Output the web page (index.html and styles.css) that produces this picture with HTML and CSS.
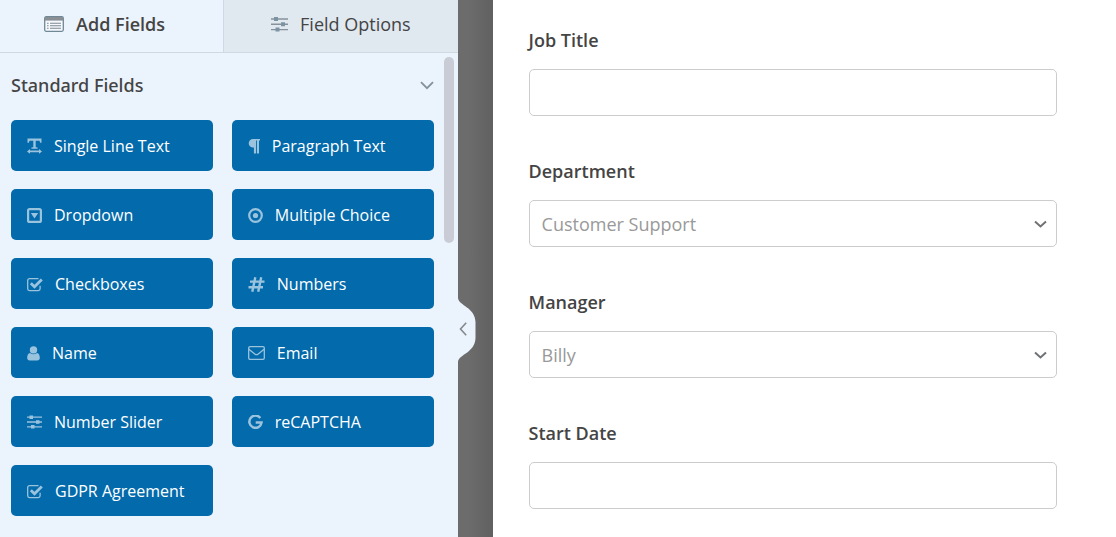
FILE: index.html
```html
<!DOCTYPE html>
<html lang="en">
<head>
<meta charset="utf-8">
<meta name="viewport" content="width=device-width, initial-scale=1">
<title>Form Builder</title>
<link rel="stylesheet" href="styles.css">
</head>
<body>
<div class="builder">
  <aside class="sidebar">
    <nav class="tabs">
      <button class="tab tab-active" type="button">
        <svg width="20" height="16" viewBox="0 0 20 16" fill="none"><rect x=".7" y=".7" width="18.6" height="14.6" rx="1.5" fill="#f5f9fd" stroke="#6f8796" stroke-width="1.3"/><path d="M1 1h18v3.6H1z" fill="#8a8f94"/><path d="M3 7.2h1.6M3 9.7h1.6M3 12.2h1.6M6 7.2h11M6 9.7h11M6 12.2h11" stroke="#7d8890" stroke-width="1.1"/></svg>
        Add Fields
      </button>
      <button class="tab" type="button">
        <svg width="17" height="16" viewBox="0 0 17 16"><path d="M0 3h17M0 8.3h17M0 13.6h17" stroke="#86919a" stroke-width="1.4"/><path d="M3 1h4v4H3zM10 6.3h4v4h-4zM4.500 11.600h4v4h-4z" fill="#7b93a3"/></svg>
        Field Options
      </button>
    </nav>
    <section class="group">
      <button class="group-title" type="button" aria-expanded="true">
        Standard Fields
        <svg width="14" height="9" viewBox="0 0 14 9" fill="none"><path d="M1 1.200l6 6 6-6" stroke="#84909b" stroke-width="1.800"/></svg>
      </button>
      <div class="fields">
        <button class="field" type="button"><svg width="15" height="16" viewBox="0 0 15 16"><path d="M.5.500h14v4.200h-1.400l-.6-2H8.700v6.500l1.900.4v1.200H4.400V9.600l1.900-.4V2.700H2.500l-.6 2H.5zM0 13.400l3-2.400v1.600h9V11l3 2.400-3 2.400v-1.600H3v1.600z" fill="currentColor"/></svg>Single Line Text</button>
        <button class="field" type="button"><svg width="12" height="15" viewBox="0 0 12 15"><path d="M5 0h7v1.600h-1V14.500H8.900V1.600H8v12.900H5.900V8.600H5A4.300 4.300 0 0 1 5 0z" fill="currentColor"/></svg>Paragraph Text</button>
        <button class="field" type="button"><svg width="15" height="15" viewBox="0 0 15 15"><rect x="1.100" y="1.100" width="12.800" height="12.800" rx="1.500" fill="none" stroke="currentColor" stroke-width="2.200"/><path d="M3.800 5h7.400L7.500 10.500z" fill="currentColor"/></svg>Dropdown</button>
        <button class="field" type="button"><svg width="15" height="15" viewBox="0 0 15 15"><circle cx="7.500" cy="7.500" r="6.300" fill="none" stroke="currentColor" stroke-width="2.200"/><circle cx="7.500" cy="7.500" r="2.600" fill="currentColor"/></svg>Multiple Choice</button>
        <button class="field" type="button"><svg width="16" height="15" viewBox="0 0 16 15" fill="none" stroke="currentColor"><path d="M11.500 1.600H2.500A1.800 1.800 0 0 0 .700 3.400v8.400a1.800 1.800 0 0 0 1.800 1.800h8.800a1.800 1.800 0 0 0 1.800-1.800V8.800" stroke-width="1.300"/><path d="M3.800 6.200l3.700 3.600 7.300-7.300" stroke-width="2.800"/></svg>Checkboxes</button>
        <button class="field" type="button"><svg width="17" height="15" viewBox="0 0 17 15" fill="none" stroke="currentColor" stroke-width="2.400"><path d="M7.300.3L4.300 14.700M13.200.3l-3 14.400M2 4.600h14.500M.5 10.200h14.500"/></svg>Numbers</button>
        <button class="field" type="button"><svg width="13" height="15" viewBox="0 0 13 15" fill="currentColor"><circle cx="6.500" cy="3.900" r="3.700"/><path d="M3 6.900C.9 7.300.2 9.300.2 11.800c0 1.700 1 2.700 2.500 2.700h7.600c1.500 0 2.500-1 2.500-2.700 0-2.500-.7-4.500-2.800-4.900a5 5 0 0 1-7 0z"/></svg>Name</button>
        <button class="field" type="button"><svg width="17" height="14" viewBox="0 0 17 14" fill="none" stroke="currentColor" stroke-width="1.300"><rect x=".700" y=".700" width="15.600" height="12.600" rx="1.300"/><path d="M1 3.200c2 1.700 4 3.200 5.800 4.700 1.200 1 2.200 1 3.400 0C12 6.400 14 4.900 16 3.200"/></svg>Email</button>
        <button class="field" type="button"><svg width="15" height="14" viewBox="0 0 15 14"><path d="M0 2.200h15M0 7h15M0 11.800h15" stroke="currentColor" stroke-width="1.300"/><path d="M2.500.500H6v3.400H2.500zM9 5.300h3.500v3.400H9zM4 10.100h3.500v3.400H4z" fill="currentColor"/></svg>Number Slider</button>
        <button class="field" type="button"><svg width="15" height="15" viewBox="0 0 15 15" fill="none"><path d="M12.300 3A6.100 6.100 0 1 0 13.500 7.600H7.700" stroke="currentColor" stroke-width="2.500"/></svg>reCAPTCHA</button>
        <button class="field" type="button"><svg width="16" height="15" viewBox="0 0 16 15" fill="none" stroke="currentColor"><path d="M11.500 1.600H2.500A1.800 1.800 0 0 0 .700 3.400v8.400a1.800 1.800 0 0 0 1.800 1.800h8.800a1.800 1.800 0 0 0 1.800-1.800V8.800" stroke-width="1.300"/><path d="M3.800 6.200l3.700 3.600 7.300-7.300" stroke-width="2.800"/></svg>GDPR Agreement</button>
      </div>
    </section>
    <div class="scroll-thumb"></div>
    <button class="collapse" type="button" aria-label="Collapse sidebar">
      <svg width="18" height="64" viewBox="0 0 18 64" fill="none"><path d="M0 0C1 8 17 9 17.500 24v16C17 55 1 56 0 64z" fill="#ebf3fc"/><path d="M8.200 24.800L2.500 31l5.700 6.200" stroke="#84888c" stroke-width="1.600"/></svg>
    </button>
  </aside>
  <main class="preview">
    <form class="form">
      <div class="row">
        <label for="job">Job Title</label>
        <input id="job" class="control" type="text">
      </div>
      <div class="row">
        <label for="department">Department</label>
        <div class="select-wrap">
          <select id="department" class="control"><option>Customer Support</option></select>
          <svg class="caret" width="13" height="9" viewBox="0 0 13 9" fill="none"><path d="M1 1.500l5.500 5 5.500-5" stroke="#6f7275" stroke-width="2"/></svg>
        </div>
      </div>
      <div class="row">
        <label for="manager">Manager</label>
        <div class="select-wrap">
          <select id="manager" class="control"><option>Billy</option></select>
          <svg class="caret" width="13" height="9" viewBox="0 0 13 9" fill="none"><path d="M1 1.500l5.500 5 5.500-5" stroke="#6f7275" stroke-width="2"/></svg>
        </div>
      </div>
      <div class="row">
        <label for="start">Start Date</label>
        <input id="start" class="control" type="text">
      </div>
    </form>
  </main>
</div>
</body>
</html>
```

FILE: styles.css
```css
* {
  box-sizing: border-box;
}

body {
  margin: 0;
  overflow: hidden;
  color: #444;
  font-family: "Open Sans", "Noto Sans", sans-serif;
}

button {
  margin: 0;
  padding: 0;
  border: 0;
  background: none;
  color: inherit;
  font: inherit;
  cursor: pointer;
}

svg {
  display: block;
  flex: none;
}

.builder {
  display: flex;
  gap: 35px;
  min-height: 100vh;
  background: linear-gradient(90deg, #6c6c6c 42%, #616161 44%);
}

.sidebar {
  position: relative;
  flex: 0 0 41%;
  background: #ebf3fc;
}

.tabs {
  display: flex;
  height: 53px;
  border-bottom: 1px solid #d0d9e3;
}

.tab {
  display: flex;
  flex: 1;
  align-items: center;
  justify-content: center;
  gap: 12px;
  padding-bottom: 4px;
  background: #e0e8f0;
  font-size: 18px;
  line-height: 24px;
}

.tab-active {
  flex: 0 0 49%;
  padding-right: 14px;
  border-right: 1px solid #d0d9e3;
  background: #ebf3fc;
  font-weight: 600;
}

.group {
  padding: 20px 24px 20px 11px;
}

.group-title {
  display: flex;
  align-items: center;
  justify-content: space-between;
  width: 100%;
  margin-bottom: 23px;
  font-family: "Noto Sans", "Open Sans", sans-serif;
  font-size: 18px;
  font-weight: 500;
  line-height: 24px;
}

.fields {
  display: grid;
  grid-template-columns: 1fr 1fr;
  gap: 18px 19px;
}

.field {
  display: flex;
  align-items: center;
  gap: 12px;
  height: 51px;
  padding: 1px 16px 0;
  border-radius: 5px;
  background: #036aab;
  color: #fff;
  font-size: 16px;
  line-height: 24px;
  white-space: nowrap;
}

.field svg {
  color: #9ac3de;
}

.scroll-thumb {
  position: absolute;
  top: 57px;
  right: 4px;
  width: 10px;
  height: 186px;
  border-radius: 5px;
  background: #c9ccd4;
}

.collapse {
  position: absolute;
  top: 298px;
  left: 100%;
}

.preview {
  flex: 1;
  padding: 28px 59px 27px 36px;
  background: #fff;
}

.form {
  display: grid;
  gap: 43px;
}

.row {
  display: grid;
  gap: 17px;
}

.row label {
  font-size: 18px;
  font-weight: 600;
  line-height: 24px;
}

.control {
  display: block;
  width: 100%;
  height: 47px;
  padding: 0 12px;
  appearance: none;
  border: 1px solid #ccc;
  border-radius: 5px;
  background: #fff;
  color: #999;
  font: inherit;
  font-size: 18px;
}

.select-wrap {
  position: relative;
}

.caret {
  position: absolute;
  top: 20px;
  right: 10px;
  pointer-events: none;
}
```
